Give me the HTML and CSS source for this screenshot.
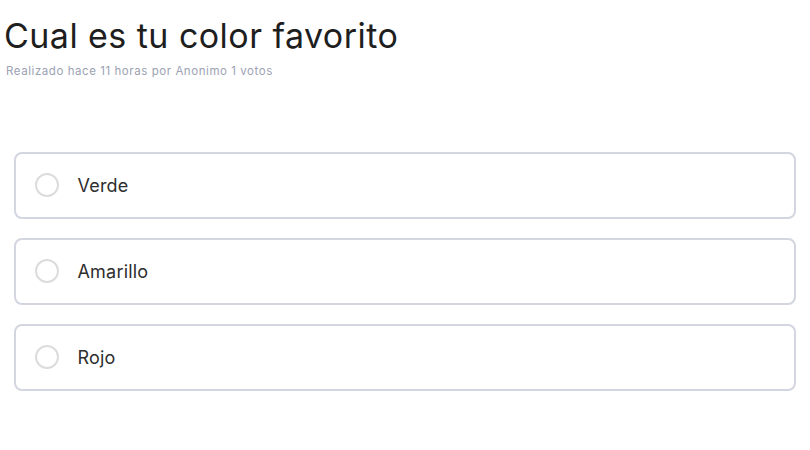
FILE: index.html
```html
<!DOCTYPE html>
<html lang="es">
<head>
<meta charset="utf-8">
<link rel="stylesheet" href="styles.css">
</head>
<body>
<main class="poll">
  <header class="poll-header">
    <h1 class="poll-title">Cual es tu color favorito</h1>
    <p class="poll-meta">Realizado hace 11 horas por Anonimo 1 votos</p>
  </header>
  <ul class="options">
    <li class="option"><span class="radio"></span><span class="option-label">Verde</span></li>
    <li class="option"><span class="radio"></span><span class="option-label">Amarillo</span></li>
    <li class="option"><span class="radio"></span><span class="option-label">Rojo</span></li>
  </ul>
</main>
</body>
</html>
```

FILE: styles.css
```css
html, body {
  margin: 0;
  padding: 0;
  background: #ffffff;
}
body {
  font-family: "Inter", "Noto Sans", sans-serif;
  color: #1f1f1f;
}
.poll {
  padding: 14px 14px 0 4px;
}
.poll-title {
  margin: 0;
  font-size: 34px;
  font-weight: 400;
  line-height: 44px;
  letter-spacing: 0.45px;
  color: #1e1e1e;
}
.poll-meta {
  margin: 6px 0 0 2px;
  font-size: 11.5px;
  line-height: 14px;
  letter-spacing: 0.56px;
  color: #9ca1b3;
}
.options {
  list-style: none;
  margin: 74px 0 0 9.5px;
  padding: 0;
  display: flex;
  flex-direction: column;
  gap: 19.5px;
}
.option {
  display: flex;
  align-items: center;
  height: 66.5px;
  box-sizing: border-box;
  border: 2px solid #d3d5e0;
  border-radius: 8px;
  padding-left: 19px;
}
.radio {
  width: 24px;
  height: 24px;
  box-sizing: border-box;
  border: 2px solid #dcdcdc;
  border-radius: 50%;
  flex: none;
}
.option-label {
  margin-left: 19px;
  font-size: 18px;
  letter-spacing: 0.2px;
  color: #2e2e2e;
}
```
